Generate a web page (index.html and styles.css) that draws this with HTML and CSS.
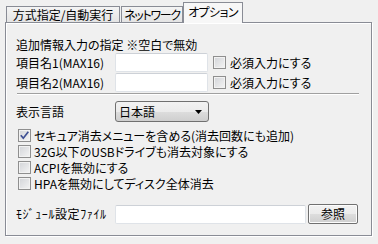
FILE: index.html
```html
<!DOCTYPE html>
<html lang="ja">
<head>
    <meta charset="UTF-8">
    <title>オプション</title>
    <link rel="stylesheet" href="styles.css">
</head>
<body>
    <div class="tabs">
        <div class="tab first">方式指定/自動実行</div>
        <div class="tab net">ネットワーク</div>
        <div class="tab active">オプション</div>
    </div>
    <div class="panel">
        <div class="heading">追加情報入力の指定 ※空白で無効</div>
        <div class="field-row">
            <span class="label">項目名1(MAX16)</span>
            <span class="textbox short"></span>
            <span class="check req"><span class="box"></span>必須入力にする</span>
        </div>
        <div class="field-row second">
            <span class="label">項目名2(MAX16)</span>
            <span class="textbox short"></span>
            <span class="check req"><span class="box"></span>必須入力にする</span>
        </div>
        <div class="separator"></div>
        <div class="field-row lang">
            <span class="label">表示言語</span>
            <span class="select">日本語
                <svg class="arrow" width="7" height="4" viewBox="0 0 7 4"><path d="M0 0h7L3.5 4z" fill="#000"/></svg>
            </span>
        </div>
        <div class="options">
            <span class="check"><span class="box">
                <svg width="11" height="11" viewBox="0 0 11 11"><path d="M1.8 5.2 L4.3 8.2 L9.3 1.8" fill="none" stroke="#3d4f93" stroke-width="1.7"/></svg>
            </span>セキュア消去メニューを含める(消去回数にも追加)</span>
            <span class="check"><span class="box"></span>32G以下のUSBドライブも消去対象にする</span>
            <span class="check"><span class="box"></span>ACPIを無効にする</span>
            <span class="check"><span class="box"></span>HPAを無効にしてディスク全体消去</span>
        </div>
        <div class="field-row module">
            <span class="label module-label">ﾓｼﾞｭｰﾙ設定ﾌｧｲﾙ</span>
            <span class="textbox long"></span>
            <span class="button">参照</span>
        </div>
    </div>
</body>
</html>
```

FILE: styles.css
```css
body {
    margin: 0;
    width: 378px;
    height: 244px;
    overflow: hidden;
    background-color: #f0f0f0;
    color: #000;
    font-family: "Noto Sans CJK JP", sans-serif;
    font-size: 12px;
    font-feature-settings: "palt";
}
.tabs {
    display: flex;
    align-items: flex-end;
    height: 22px;
    padding-left: 6px;
    position: relative;
    z-index: 1;
}
.tab {
    box-sizing: border-box;
    height: 16px;
    border: 1px solid #898c95;
    border-bottom: none;
    background: linear-gradient(#f4f4f4, #e4e4e4);
    line-height: 15px;
    text-align: center;
    white-space: nowrap;
    overflow: hidden;
}
.tab.first {
    width: 114px;
}
.tab.net {
    margin-left: 1px;
    width: 62px;
    letter-spacing: -1.3px;
}
.tab.active {
    width: 60px;
    height: 21px;
    margin-bottom: -1px;
    background: #f7f7f7;
    line-height: 18px;
    letter-spacing: -0.6px;
}
.panel {
    box-sizing: border-box;
    margin-left: 5px;
    width: 367px;
    height: 214px;
    border: 1px solid #898c95;
    box-shadow: inset 1px 1px #fff, 1px 1px #fff;
    padding: 14px 10px 0;
}
.heading {
    height: 16px;
    line-height: 16px;
}
.field-row {
    display: flex;
    align-items: center;
    height: 19px;
}
.field-row.second {
    margin-top: 1px;
}
.label {
    width: 99px;
    flex-shrink: 0;
    white-space: nowrap;
}
.textbox {
    box-sizing: border-box;
    height: 19px;
    background: #fff;
    border: 1px solid #dfe3e8;
    border-top-color: #cdd1d7;
    border-radius: 2px;
}
.textbox.short {
    width: 93px;
}
.textbox.long {
    width: 191px;
    margin-top: 1px;
}
.check {
    display: flex;
    align-items: center;
    height: 16px;
    white-space: nowrap;
}
.check.req {
    margin-left: 5px;
}
.box {
    box-sizing: border-box;
    width: 13px;
    height: 13px;
    margin-right: 3px;
    border: 1px solid #8f8f8f;
    background: linear-gradient(135deg, #d2d4d8, #f4f4f4);
    box-shadow: inset 0 0 0 1px #f2f2f2;
    flex-shrink: 0;
}
.check.req .box {
    margin-right: 4px;
}
.box svg {
    display: block;
}
.separator {
    margin: 1px 2px 0 1px;
    height: 0;
    border-top: 1px solid #a0a0a0;
    border-bottom: 1px solid #fff;
}
.field-row.lang {
    margin-top: 6px;
    height: 21px;
}
.select {
    box-sizing: border-box;
    width: 94px;
    height: 21px;
    display: flex;
    align-items: center;
    justify-content: space-between;
    padding: 0 6px 0 3px;
    border: 1px solid #707070;
    border-radius: 3px;
    background: linear-gradient(#f2f2f2, #ebebeb 50%, #dddddd 51%, #cfcfcf);
}
.options {
    margin: 5px 0 0 2px;
    display: flex;
    flex-direction: column;
}
.field-row.module {
    margin-top: 13px;
    height: 20px;
    align-items: flex-start;
}
.field-row.module .label {
    line-height: 20px;
}
.module-label {
    letter-spacing: 0.6px;
}
.button {
    box-sizing: border-box;
    width: 50px;
    height: 20px;
    margin-left: 2px;
    border: 1px solid #707070;
    border-radius: 2px;
    background: linear-gradient(#f2f2f2, #ebebeb 50%, #dddddd 51%, #cfcfcf);
    box-shadow: inset 0 0 0 1px #fcfcfc;
    text-align: center;
    line-height: 18px;
}
```
